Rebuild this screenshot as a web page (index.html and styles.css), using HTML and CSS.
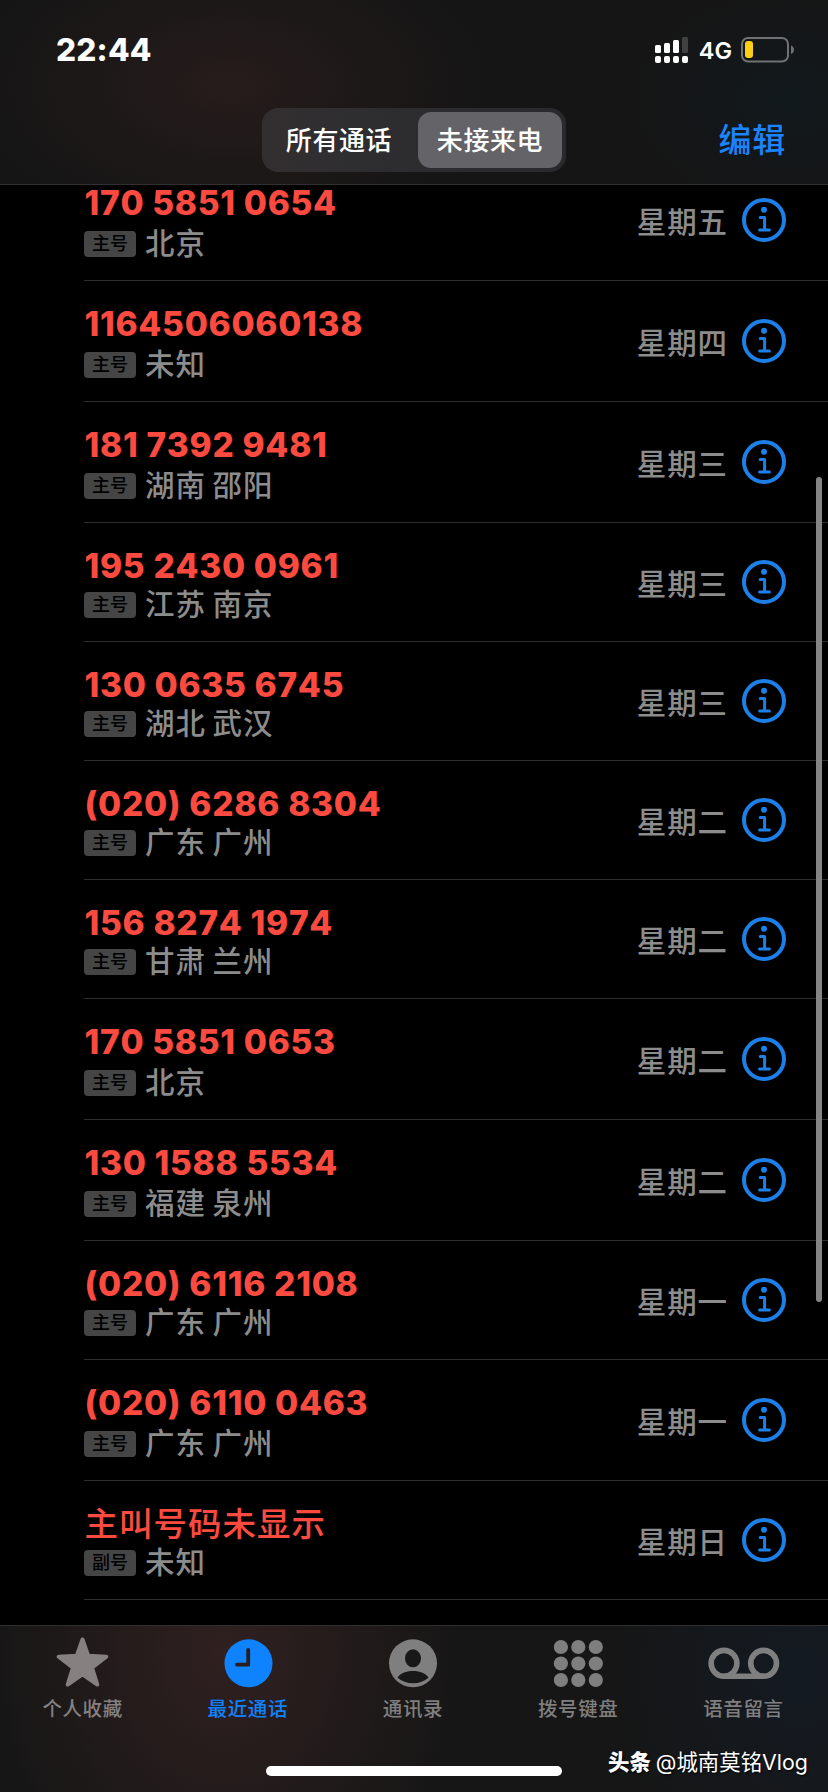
FILE: index.html
```html
<!DOCTYPE html>
<html lang="zh-CN">
<head>
<meta charset="utf-8">
<title>最近通话</title>
<link rel="stylesheet" href="styles.css">
</head>
<body>
<svg class="defs" width="0" height="0" aria-hidden="true">
  <symbol id="info" viewBox="0 0 44 44">
    <circle cx="22" cy="22" r="20" fill="none" stroke="currentColor" stroke-width="4"/>
    <circle cx="22" cy="11.800" r="3" fill="currentColor"/>
    <path d="M18.200 19.400h4.400v12.500M17.600 32h9.800" fill="none" stroke="currentColor" stroke-width="3" stroke-linecap="round" stroke-linejoin="round"/>
  </symbol>
</svg>
<div class="phone">
  <header class="header">
    <div class="status">
      <span class="time">22:44</span>
      <div class="status-right">
        <svg class="signal" width="34" height="27" viewBox="0 0 34 27">
          <g fill="#fff">
            <rect x="0" y="8" width="6" height="8" rx="1.5"/><rect x="9" y="6" width="6" height="10" rx="1.5"/><rect x="18" y="3" width="6" height="13" rx="1.5"/>
            <rect x="0" y="19" width="6" height="7" rx="2"/><rect x="9" y="19" width="6" height="7" rx="2"/><rect x="18" y="19" width="6" height="7" rx="2"/><rect x="27" y="19" width="6" height="7" rx="2"/>
          </g>
          <rect x="27" y="0" width="6" height="16" rx="1.5" fill="#414141"/>
        </svg>
        <span class="network">4G</span>
        <svg class="battery" width="54" height="26" viewBox="0 0 54 26">
          <rect x="1" y="1" width="46" height="23.5" rx="6" fill="none" stroke="#707272" stroke-width="2"/>
          <rect x="4" y="4" width="8" height="17" rx="3" fill="#fdd016"/>
          <path d="M50 8.500c4 1.500 4 7 0 8.500z" fill="#707272"/>
        </svg>
      </div>
    </div>
    <nav class="nav">
      <div class="segment">
        <span class="segment-item">所有通话</span>
        <span class="segment-item selected">未接来电</span>
      </div>
      <span class="edit">编辑</span>
    </nav>
  </header>

  <main class="list">
    <div class="row first"><div class="who"><div class="number">170 5851 0654</div><div class="meta"><span class="badge">主号</span><span>北京</span></div></div><span class="day">星期五</span><svg class="info"><use href="#info"/></svg></div>
    <div class="row tall"><div class="who"><div class="number">1164506060138</div><div class="meta"><span class="badge">主号</span><span>未知</span></div></div><span class="day">星期四</span><svg class="info"><use href="#info"/></svg></div>
    <div class="row tall"><div class="who"><div class="number">181 7392 9481</div><div class="meta"><span class="badge">主号</span><span>湖南 邵阳</span></div></div><span class="day">星期三</span><svg class="info"><use href="#info"/></svg></div>
    <div class="row"><div class="who"><div class="number">195 2430 0961</div><div class="meta"><span class="badge">主号</span><span>江苏 南京</span></div></div><span class="day">星期三</span><svg class="info"><use href="#info"/></svg></div>
    <div class="row"><div class="who"><div class="number">130 0635 6745</div><div class="meta"><span class="badge">主号</span><span>湖北 武汉</span></div></div><span class="day">星期三</span><svg class="info"><use href="#info"/></svg></div>
    <div class="row"><div class="who"><div class="number">(020) 6286 8304</div><div class="meta"><span class="badge">主号</span><span>广东 广州</span></div></div><span class="day">星期二</span><svg class="info"><use href="#info"/></svg></div>
    <div class="row"><div class="who"><div class="number">156 8274 1974</div><div class="meta"><span class="badge">主号</span><span>甘肃 兰州</span></div></div><span class="day">星期二</span><svg class="info"><use href="#info"/></svg></div>
    <div class="row tall"><div class="who"><div class="number">170 5851 0653</div><div class="meta"><span class="badge">主号</span><span>北京</span></div></div><span class="day">星期二</span><svg class="info"><use href="#info"/></svg></div>
    <div class="row tall"><div class="who"><div class="number">130 1588 5534</div><div class="meta"><span class="badge">主号</span><span>福建 泉州</span></div></div><span class="day">星期二</span><svg class="info"><use href="#info"/></svg></div>
    <div class="row"><div class="who"><div class="number">(020) 6116 2108</div><div class="meta"><span class="badge">主号</span><span>广东 广州</span></div></div><span class="day">星期一</span><svg class="info"><use href="#info"/></svg></div>
    <div class="row tall"><div class="who"><div class="number">(020) 6110 0463</div><div class="meta"><span class="badge">主号</span><span>广东 广州</span></div></div><span class="day">星期一</span><svg class="info"><use href="#info"/></svg></div>
    <div class="row"><div class="who"><div class="number hidden-id">主叫号码未显示</div><div class="meta"><span class="badge">副号</span><span>未知</span></div></div><span class="day">星期日</span><svg class="info"><use href="#info"/></svg></div>
    <div class="scroll-thumb"></div>
  </main>

  <footer class="tabbar">
    <div class="tabs">
      <div class="tab warm">
        <svg width="54" height="54" viewBox="0 0 54 54"><path d="M26.500 4.500l5.800 16.300 18 .9-14.300 10.900L41.300 49.500 26.500 39.400 11.700 49.500l5.300-16.900L2.700 21.700l18-.9z" fill="currentColor" stroke="currentColor" stroke-width="4" stroke-linejoin="round"/></svg>
        <span>个人收藏</span>
      </div>
      <div class="tab active">
        <svg width="54" height="54" viewBox="0 0 54 54"><circle cx="27.500" cy="28.300" r="24" fill="currentColor"/><path d="M27.200 14.800V29.700H16" fill="none" stroke="#2b1d1e" stroke-width="3.800" stroke-linecap="round" stroke-linejoin="round"/></svg>
        <span>最近通话</span>
      </div>
      <div class="tab">
        <svg width="54" height="54" viewBox="0 0 54 54"><circle cx="27" cy="28.300" r="24" fill="currentColor"/><ellipse cx="27" cy="23.300" rx="8" ry="9" fill="#191818"/><path d="M11.500 42.800C14 38.300 20 36 27 36S40 38.300 42.500 42.800C38.500 46.300 33 48.300 27 48.300S15.500 46.300 11.500 42.800z" fill="#191818"/></svg>
        <span>通讯录</span>
      </div>
      <div class="tab">
        <svg width="54" height="54" viewBox="0 0 54 54" fill="currentColor"><circle cx="9.900" cy="12" r="7.100"/><circle cx="27.300" cy="12" r="7.100"/><circle cx="44.800" cy="12" r="7.100"/><circle cx="9.900" cy="28.500" r="7.100"/><circle cx="27.300" cy="28.500" r="7.100"/><circle cx="44.800" cy="28.500" r="7.100"/><circle cx="9.900" cy="45" r="7.100"/><circle cx="27.300" cy="45" r="7.100"/><circle cx="44.800" cy="45" r="7.100"/></svg>
        <span>拨号键盘</span>
      </div>
      <div class="tab">
        <svg width="74" height="54" viewBox="0 0 74 54" fill="none" stroke="currentColor" stroke-width="5.600"><circle cx="18" cy="28.300" r="12.900"/><circle cx="57.600" cy="28.300" r="12.900"/><path d="M18 41.200H57.600"/></svg>
        <span>语音留言</span>
      </div>
    </div>
    <div class="home-indicator"></div>
    <div class="watermark"><b>头条</b><span>@城南莫铭Vlog</span></div>
  </footer>
</div>
</body>
</html>
```
FILE: styles.css
```css
* { box-sizing: border-box; }

body {
  margin: 0;
  background: #000;
  font-family: Inter, "Noto Sans CJK SC", sans-serif;
  -webkit-font-smoothing: antialiased;
}

.defs { position: absolute; }

.phone {
  position: relative;
  display: flex;
  flex-direction: column;
  width: 828px;
  height: 1792px;
  overflow: hidden;
}

/* header */
.header {
  flex: none;
  height: 185px;
  border-bottom: 1px solid #303031;
  background:
    radial-gradient(ellipse 260px 150px at 230px 85px, #261c1b, transparent),
    radial-gradient(ellipse 160px 110px at 790px 100px, #12191d, transparent),
    #151515;
}

.status {
  display: flex;
  align-items: center;
  justify-content: space-between;
  height: 100px;
  padding: 0 33px 0 56px;
}

.time {
  padding-bottom: 2px;
  color: #fff;
  font-size: 31.500px;
  font-weight: 800;
  letter-spacing: 0.2px;
}

.status-right { display: flex; align-items: center; }

.network {
  margin: 0 9px 0 10px;
  color: #fff;
  font-size: 23.500px;
  font-weight: 600;
}

.nav {
  display: flex;
  align-items: center;
  justify-content: space-between;
  height: 64px;
  margin-top: 8px;
  padding: 0 42px 0 262px;
}

.segment {
  display: flex;
  width: 304px;
  height: 64px;
  padding: 4px;
  border-radius: 16px;
  background: linear-gradient(90deg, #332f30, #2d2d30 40%, #2a2a2c);
}

.segment-item {
  display: flex;
  flex: 1;
  align-items: center;
  justify-content: center;
  padding: 0 6px 3px 0;
  border-radius: 13px;
  color: #fff;
  font-size: 26px;
  font-weight: 500;
  letter-spacing: 0.6px;
}

.segment-item.selected {
  flex: none;
  width: 144px;
  padding-right: 0;
  background: #646367;
}

.edit {
  padding-bottom: 4px;
  color: #1b84fb;
  font-size: 33px;
  font-weight: 500;
  letter-spacing: 0.8px;
}

/* calls */
.list {
  position: relative;
  flex: 1;
  padding-left: 84px;
}

.row {
  display: flex;
  align-items: center;
  height: 119px;
  padding-right: 42px;
  border-bottom: 1px solid #2e2e30;
}

.row.tall { height: 121px; }
.row.first { height: 96px; }
.row.first .who { margin-top: -25px; }
.row.first .day { margin-top: -25px; }
.row.first .info { margin-top: -25px; }

.who {
  display: flex;
  flex: 1;
  flex-direction: column;
  justify-content: space-between;
  align-self: stretch;
  padding: 23px 0 18px;
}

.number {
  height: 40px;
  padding-left: 0.5px;
  color: #fb4a40;
  font-size: 33.500px;
  font-weight: 800;
  font-kerning: none;
  letter-spacing: 0.7px;
  line-height: 40px;
  white-space: nowrap;
}

.number.hidden-id {
  font-weight: 500;
  letter-spacing: 1px;
}

.meta {
  display: flex;
  align-items: center;
  height: 36px;
  color: #8c8c8c;
  font-size: 29.500px;
  font-weight: 500;
  letter-spacing: 0.9px;
  line-height: 34px;
  word-spacing: -2px;
}

.meta span:last-child { padding-bottom: 2px; }

.badge {
  width: 52px;
  height: 26px;
  margin-right: 9px;
  border-radius: 4px;
  background: #454545;
  color: #000;
  font-size: 18px;
  letter-spacing: 0;
  line-height: 26px;
  text-align: center;
}

.day {
  padding-top: 3px;
  color: #8c8c8c;
  font-size: 29.500px;
  font-weight: 500;
  letter-spacing: 0.9px;
  line-height: 36px;
}

.info {
  width: 44px;
  height: 44px;
  margin-left: 14px;
  color: #1c80e8;
}

.scroll-thumb {
  position: absolute;
  top: 292px;
  right: 6px;
  width: 6px;
  height: 825px;
  border-radius: 3px;
  background: #848484;
}

/* tab bar */
.tabbar {
  position: relative;
  flex: none;
  height: 167px;
  border-top: 1px solid #303031;
  background:
    radial-gradient(ellipse 240px 300px at 225px 25px, #302020, transparent),
    radial-gradient(ellipse 190px 220px at 800px 50px, #141a22, transparent),
    #161616;
}

.tabs {
  display: flex;
  padding: 9px 2px 0 0;
}

.tab {
  display: flex;
  flex: 1;
  flex-direction: column;
  align-items: center;
  color: #7f7f7f;
  font-size: 19.500px;
  font-weight: 500;
  letter-spacing: 0.6px;
  line-height: 28px;
}

.tab span { margin-top: 6px; }
.tab.warm { color: #868080; }
.tab.active { color: #0f83fd; }

.home-indicator {
  position: absolute;
  left: 266px;
  top: 140px;
  width: 296px;
  height: 10px;
  border-radius: 5px;
  background: #fff;
}

.watermark {
  position: absolute;
  left: 608px;
  top: 121px;
  display: flex;
  align-items: center;
  gap: 5px;
  color: #fff;
  font-size: 21.400px;
  line-height: 30px;
  text-shadow: 1px 1px 2px #000;
  white-space: nowrap;
}

.watermark b { font-weight: 900; }
```
